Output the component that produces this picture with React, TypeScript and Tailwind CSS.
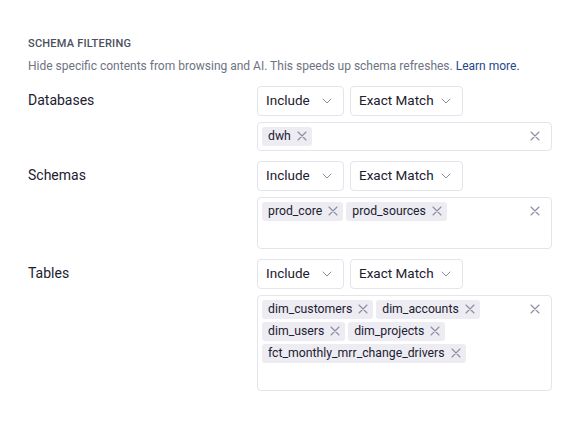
type Row = { label: string; tags: string[]; wrapInput: boolean };

const rows: Row[] = [
  { label: 'Databases', tags: ['dwh'], wrapInput: false },
  { label: 'Schemas', tags: ['prod_core', 'prod_sources'], wrapInput: true },
  {
    label: 'Tables',
    tags: ['dim_customers', 'dim_accounts', 'dim_users', 'dim_projects', 'fct_monthly_mrr_change_drivers'],
    wrapInput: true,
  },
];

function Cross({ className }: { className?: string }) {
  return (
    <svg viewBox="0 0 10 10" className={className} fill="none" stroke="currentColor" strokeWidth={1.1} strokeLinecap="round">
      <path d="M1 1L9 9M9 1L1 9" />
    </svg>
  );
}

function Chevron() {
  return (
    <svg viewBox="0 0 10 6" className="h-[6px] w-[10px] shrink-0 text-[#8a8ea0]" fill="none" stroke="currentColor" strokeWidth={1} strokeLinecap="round" strokeLinejoin="round">
      <path d="M1 1L5 5L9 1" />
    </svg>
  );
}

function Select({ value, width }: { value: string; width: string }) {
  return (
    <button className={`flex h-[30px] items-center justify-between whitespace-nowrap rounded-[4px] border border-[#e4e4ec] bg-white pl-[8px] pr-[11px] text-[13.5px] text-[#1d2030] ${width}`}>
      <span>{value}</span>
      <Chevron />
    </button>
  );
}

function Tag({ name }: { name: string }) {
  return (
    <span className="flex h-[19px] items-center gap-[6px] whitespace-nowrap rounded-[3px] bg-[#ececf2] pl-[6px] pr-[5px] text-[12.25px] text-[#1d2030]">
      {name}
      <Cross className="h-[10px] w-[10px] text-[#8a8ea0]" />
    </span>
  );
}

function FilterRow({ row }: { row: Row }) {
  return (
    <div className="grid grid-cols-[229px_295px]">
      <div className="flex h-[30px] items-center text-[14px] text-[#1d2030]">{row.label}</div>
      <div className="flex flex-col gap-[6px]">
        <div className="flex gap-[6px]">
          <Select value="Include" width="w-[87px]" />
          <Select value="Exact Match" width="w-[113px]" />
        </div>
        <div className="flex items-start rounded-[4px] border border-[#e4e4ec] bg-white p-[4px]">
          <div className="flex flex-1 flex-wrap gap-[3px]">
            {row.tags.map((t) => (
              <Tag key={t} name={t} />
            ))}
            <input
              className={
                row.wrapInput
                  ? 'h-[20px] w-full bg-transparent text-[12px] outline-none'
                  : 'h-[19px] min-w-0 flex-1 bg-transparent text-[12px] outline-none'
              }
            />
          </div>
          <div className="flex h-[19px] w-[24px] items-center justify-center">
            <Cross className="h-[10px] w-[10px] text-[#8a8ea0]" />
          </div>
        </div>
      </div>
    </div>
  );
}

export default function App() {
  return (
    <div className="min-h-[429px] w-[584px] bg-white px-[28px] pt-[36px] font-['Roboto',sans-serif]">
      {/* Header */}
      <div className="text-[11px] font-medium uppercase tracking-[0.02em] text-[#4b5060]">Schema Filtering</div>
      <p className="mt-[4px] text-[12px] text-[#6e7383]">
        Hide specific contents from browsing and AI. This speeds up schema refreshes.{' '}
        <a className="text-[#27478c]">Learn more.</a>
      </p>

      {/* Filters */}
      <div className="mt-[11px] flex flex-col gap-[10px]">
        {rows.map((r) => (
          <FilterRow key={r.label} row={r} />
        ))}
      </div>
    </div>
  );
}
